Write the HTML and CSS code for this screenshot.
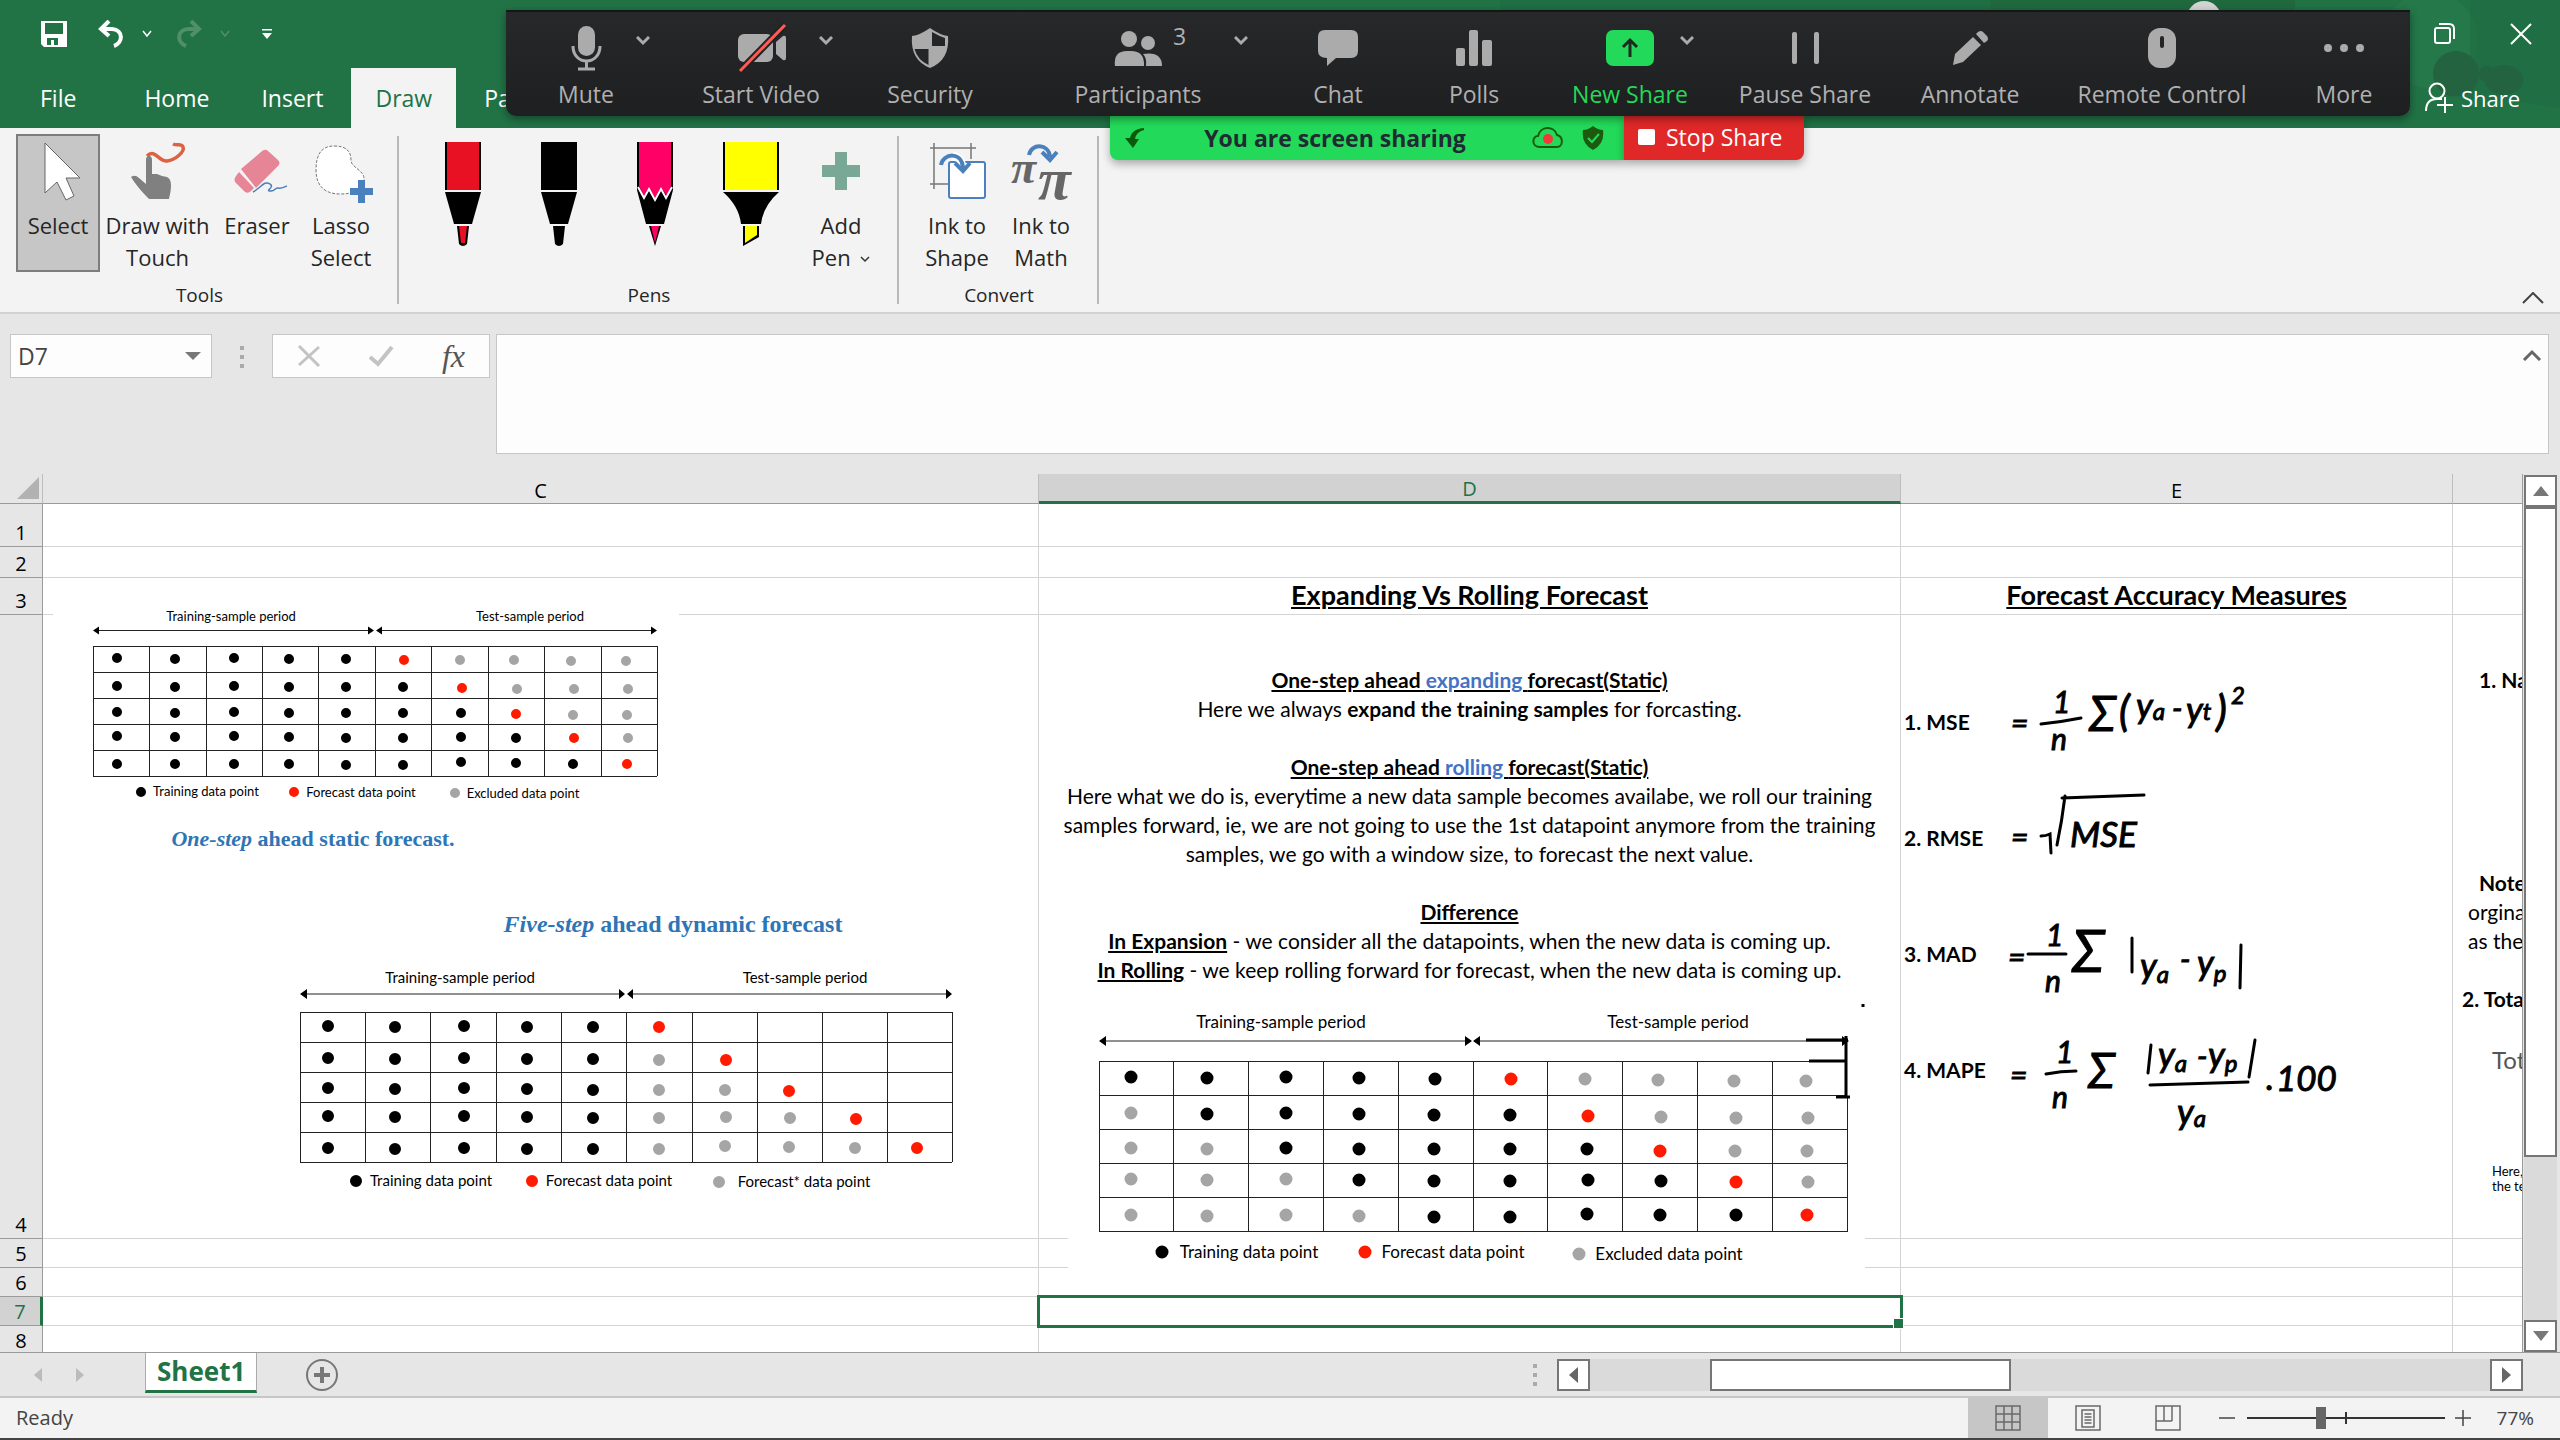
FILE: index.html
```html
<!DOCTYPE html>
<html lang="en">
<head>
<meta charset="utf-8">
<title>Forecasting workbook</title>
<link rel="stylesheet" href="styles.css">
</head>
<body>
<header class="titlebar">
  <svg class="decor" width="1060" height="128" viewBox="1500 0 1060 128" aria-hidden="true">
    <path fill="#1f6a3f" d="M1500 0h490v20h-490z" opacity=".5"/>
    <path fill="#20693f" d="M1990 0h305v20h-305z"/>
    <circle cx="2430" cy="40" r="48" fill="#24784a"/>
    <path fill="#20693f" opacity=".5" d="M2470 0h90v108q-60-10-90-10z"/>
    <circle cx="2456" cy="74" r="23" fill="#23633f"/>
    <circle cx="2487" cy="74" r="8" fill="#23633f"/>
    <ellipse cx="2504" cy="80" rx="19" ry="15" fill="#23633f"/>
    <path fill="#217346" d="M2410 104q30-10 60-7 40 10 90 11v20h-150z"/>
    <circle cx="2204" cy="18" r="17" fill="#d4d4d4"/>
  </svg>
  <div class="quick">
    <button class="plain" aria-label="Save"><svg width="26" height="26" viewBox="0 0 26 26"><path fill="#fff" fill-rule="evenodd" d="M0 0h26v26H3l-3-3zM4 2v11h18V2zM6 17v7h4v-5h3v5h4v-7z"/></svg></button>
    <button class="plain undo" aria-label="Undo"><svg width="26" height="28" viewBox="0 0 26 28"><path fill="none" stroke="#fff" stroke-width="4" d="M3 9h11c12 1 11 14 2 17"/><path fill="none" stroke="#fff" stroke-width="4" d="M11 1L3 9l8 7"/></svg></button>
    <button class="plain" aria-label="Undo history"><svg width="10" height="8" viewBox="0 0 10 8"><path fill="none" stroke="#fff" stroke-width="1.500" d="M1 1l4 5 4-5"/></svg></button>
    <button class="plain redo" aria-label="Redo"><svg width="26" height="28" viewBox="0 0 26 28"><path fill="none" stroke="#4f9069" stroke-width="4" d="M23 9H12C0 10 1 23 10 26"/><path fill="none" stroke="#4f9069" stroke-width="4" d="M15 1l8 8-8 7"/></svg></button>
    <button class="plain" aria-label="Redo history"><svg width="10" height="8" viewBox="0 0 10 8"><path fill="none" stroke="#4f9069" stroke-width="1.500" d="M1 1l4 5 4-5"/></svg></button>
    <button class="plain custom" aria-label="Customize toolbar"><svg width="10" height="10" viewBox="0 0 10 10"><path fill="#fff" d="M0 0h10v1.500H0zM0 4h10l-5 6z"/></svg></button>
    <span class="spring"></span>
    <button class="plain" aria-label="Restore"><svg width="22" height="22" viewBox="0 0 22 22"><path fill="none" stroke="#fff" stroke-width="2" d="M1 7q0-2 2-2h11q2 0 2 2v11q0 2-2 2H3q-2 0-2-2zM5 1h10q5 0 5 5v10"/></svg></button>
    <button class="plain close" aria-label="Close"><svg width="22" height="22" viewBox="0 0 22 22"><path stroke="#fff" stroke-width="2" d="M1 1l20 20M21 1L1 21"/></svg></button>
  </div>
  <nav class="tabs">
    <a href="#" class="tab file">File</a>
    <a href="#" class="tab">Home</a>
    <a href="#" class="tab">Insert</a>
    <a href="#" class="tab current">Draw</a>
    <a href="#" class="tab">Page</a>
    <span class="spring"></span>
    <button class="plain share"><svg width="28" height="32" viewBox="0 0 28 32"><circle cx="12" cy="9" r="7.500" fill="none" stroke="#fff" stroke-width="2"/><path fill="none" stroke="#fff" stroke-width="2" d="M1 29q0-12 11-12h5M20 15v16M12 23h16"/></svg>Share</button>
  </nav>
</header>

<section class="ribbon" aria-label="Draw ribbon">
  <div class="group">
    <div class="group-items">
      <button class="tool pressed"><svg width="50" height="70" viewBox="33 140 50 70"><path fill="#fff" stroke="#666" stroke-width="1" d="M45 144v50l12-11 9 18 8-4-8-18h14z"/></svg><span>Select</span></button>
      <button class="tool wide"><svg width="60" height="70" viewBox="127 140 60 70"><path fill="none" stroke="#db6341" stroke-width="3.500" d="M146 157c8-8 12 6 20 5s18-9 16-14c-1-4-6-1-10-3"/><path fill="#808080" d="M145 161q0-4 3-4t3 4v14l5 0 5 2 5 1q4 2 4 8c0 6-1 9-2 14h-20q-12-12-18-22 4-3 8 1l7 6z"/></svg><span>Draw with<br>Touch</span></button>
      <button class="tool"><svg width="60" height="70" viewBox="227 140 60 70"><path fill="#e58595" d="M241 170l20-17q4-4 7-1l10 9q3 3 0 6l-22 22-15-19z"/><path fill="#e58595" d="M239 173l-3 4q-3 4 0 7l9 9q3 2 6-1l3-3z"/><path fill="none" stroke="#4a7ebb" stroke-width="1.500" d="M253 193c8-4 11-12 17-8 5 3-5 7 0 7 5 1 5-4 8-3s5 0 9-2"/></svg><span>Eraser</span></button>
      <button class="tool"><svg width="70" height="70" viewBox="306 140 70 70"><path fill="#fff" stroke="#777" stroke-dasharray="3 1.500" d="M334 147c12 0 17 5 17 14 0 8 14 10 13 20s-10 14-24 14c-16 0-24-9-24-24s5-24 18-24z"/><path fill="#4a81bd" d="M358 181h7v8h8v7h-8v8h-7v-8h-8v-7h8z"/></svg><span>Lasso<br>Select</span></button>
    </div>
    <div class="group-name">Tools</div>
  </div>
  <div class="group pens">
    <div class="group-items">
      <button class="tool pen" aria-label="Red pen"><svg width="36" height="104" viewBox="0 0 36 104"><path d="M0 0h36v48H0zM0 50h36l-9 32H9zM12 84h12l-2 18q-4 4-8 0z"/><path fill="#e81123" d="M2 0h32v48H2zM14 84h8l-2 17h-4z"/></svg></button>
      <button class="tool pen" aria-label="Black pen"><svg width="36" height="104" viewBox="0 0 36 104"><path d="M0 0h36v48H0zM0 50h36l-9 32H9zM12 84h12l-2 18q-4 4-8 0z"/></svg></button>
      <button class="tool pen" aria-label="Pink pencil"><svg width="36" height="104" viewBox="0 0 36 104"><path d="M0 0h36v48l-9 34H9L0 48zM12 84h12l-6 20z"/><path fill="#ff0066" d="M2 0h32v44l-4 10-6-8-6 10-6-10-5 8-5-10zM14 84h8l-4 17z"/><path fill="none" stroke="#fff" stroke-width="2" d="M1 45l6 11 5-9 6 11 6-11 5 9 6-11"/></svg></button>
      <button class="tool pen" aria-label="Yellow highlighter"><svg width="56" height="104" viewBox="0 0 56 104"><path d="M0 0h56v48H0zM0 50h56q-16 14-18 32H18Q16 64 0 50zM20 84h16v11l-16 9z"/><path fill="#ff0" d="M2 0h52v48H2zM22 84h12v9l-12 8z"/></svg></button>
      <button class="tool"><svg width="50" height="70" viewBox="816 140 50 70"><path fill="#7aa897" d="M835 153h12v13h13v12h-13v13h-12v-13h-13v-12h13z"/></svg><span>Add<br>Pen <svg width="10" height="8" viewBox="0 0 10 8"><path fill="none" stroke="#333" stroke-width="1.500" d="M1 1l4 4 4-4"/></svg></span></button>
    </div>
    <div class="group-name">Pens</div>
  </div>
  <div class="group">
    <div class="group-items">
      <button class="tool"><svg width="70" height="70" viewBox="921 140 70 70"><path fill="none" stroke="#777" stroke-width="1.500" d="M933 144v46M970 144v16M929 149h46M929 185h18"/><rect x="948" y="163" width="36" height="36" rx="2" fill="#fff" stroke="#4a81bd" stroke-width="2"/><path fill="none" stroke="#fff" stroke-width="8" d="M952 157q9 1 9 12"/><path fill="none" stroke="#4a81bd" stroke-width="4" d="M940 166c2-12 21-14 22 3"/><path fill="none" stroke="#4a81bd" stroke-width="4" d="M954 164l8 8 7-8"/></svg><span>Ink to<br>Shape</span></button>
      <button class="tool"><svg width="70" height="70" viewBox="1005 140 70 70"><path fill="none" stroke="#4a81bd" stroke-width="4" d="M1028 156c2-12 20-12 21 2M1041 153l8 8 7-8"/><text class="pi small-pi" x="1010" y="184">π</text><text class="pi big-pi" x="1037" y="200">π</text></svg><span>Ink to<br>Math</span></button>
    </div>
    <div class="group-name">Convert</div>
  </div>
  <span class="spring"></span>
  <button class="plain collapse" aria-label="Collapse the ribbon"><svg width="22" height="12" viewBox="0 0 22 12"><path fill="none" stroke="#444" stroke-width="2" d="M1 11L11 1l10 10"/></svg></button>
</section>

<section class="formula-bar">
  <div class="namebox"><input type="text" value="D7" aria-label="Name box"><button class="plain" aria-label="Names"><svg width="16" height="8" viewBox="0 0 16 8"><path fill="#777" d="M0 0h16l-8 8z"/></svg></button></div>
  <svg class="grip" width="4" height="22" viewBox="0 0 4 22"><path fill="#aaa" d="M0 0h4v4H0zM0 9h4v4H0zM0 18h4v4H0z"/></svg>
  <div class="entry">
    <button class="plain" aria-label="Cancel"><svg width="24" height="22" viewBox="0 0 24 22"><path fill="none" stroke="#c3c3c3" stroke-width="3" d="M2 1l20 20M22 2L2 20"/></svg></button>
    <button class="plain" aria-label="Enter"><svg width="26" height="22" viewBox="0 0 26 22"><path fill="none" stroke="#c3c3c3" stroke-width="4" d="M2 12l8 7L24 2"/></svg></button>
    <button class="plain fx" aria-label="Insert function">fx</button>
  </div>
  <div class="formula"><textarea aria-label="Formula"></textarea><button class="plain" aria-label="Collapse formula bar"><svg width="20" height="12" viewBox="0 0 20 12"><path fill="none" stroke="#666" stroke-width="3" d="M2 11l8-8 8 8"/></svg></button></div>
</section>

<main class="workbook">
  <div class="sheet">
    <table class="cells">
      <colgroup><col class="col-num"><col class="col-c"><col class="col-d"><col class="col-e"><col class="col-f"></colgroup>
      <thead>
        <tr><th class="corner"><svg width="22" height="22" viewBox="0 0 22 22"><path fill="#b2b2b2" d="M22 0v22H0z"/></svg></th><th>C</th><th class="active">D</th><th>E</th><th></th></tr>
      </thead>
      <tbody>
        <tr class="row-1"><th>1</th><td></td><td></td><td></td><td></td></tr>
        <tr class="row-2"><th>2</th><td></td><td></td><td></td><td></td></tr>
        <tr class="row-3"><th>3</th><td></td><td class="heading">Expanding Vs Rolling Forecast</td><td class="heading">Forecast Accuracy Measures</td><td></td></tr>
        <tr class="row-4"><th>4</th><td></td>
          <td class="notes">
            <p><b><u>One-step ahead <span class="blue">expanding </span>forecast(Static)</u></b><br>Here we always <b>expand the training samples</b> for forcasting.</p>
            <p><b><u>One-step ahead <span class="blue">rolling </span>forecast(Static)</u></b><br>Here what we do is, everytime a new data sample becomes availabe, we roll our training<br>samples forward, ie, we are not going to use the 1st datapoint anymore from the training<br>samples, we go with a window size, to forecast the next value.</p>
            <p><b><u>Difference</u></b><br><b><u>In Expansion</u></b> - we consider all the datapoints, when the new data is coming up.<br><b><u>In Rolling</u></b> - we keep rolling forward for forecast, when the new data is coming up.</p>
          </td>
          <td class="measures"><p>1. MSE</p><p>2. RMSE</p><p>3. MAD</p><p>4. MAPE</p></td>
          <td class="next">
            <p class="in-2"><b>1. Na</b></p>
            <p class="note"><b class="in-2">Note</b><br><span class="in-1">orgina</span><br><span class="in-1">as the</span></p>
            <p><b class="in-0">2. Tota</b></p>
            <p class="in-3 total">Tot</p>
            <p class="in-3 tiny">Here,<br>the te</p>
          </td></tr>
        <tr class="row-n"><th>5</th><td></td><td></td><td></td><td></td></tr>
        <tr class="row-n"><th>6</th><td></td><td></td><td></td><td></td></tr>
        <tr class="row-n"><th class="active">7</th><td></td><td class="selected"></td><td></td><td></td></tr>
        <tr class="row-n"><th>8</th><td></td><td></td><td></td><td></td></tr>
      </tbody>
    </table>

    <svg class="picture static" width="626" height="268" viewBox="53 600 626 268">
      <path class="rule" d="M93 646.500h564M93 672.500h564M93 698.500h564M93 724.500h564M93 750.500h564M93 776.500h564M93.500 646v130M149.500 646v130M206.500 646v130M262.500 646v130M318.500 646v130M375.500 646v130M431.500 646v130M488.500 646v130M544.500 646v130M601.500 646v130M657.500 646v130"/>
      <path class="rule" d="M96 630.500h276M378 630.500h276"/>
      <path d="M93 630.500l6-4v8zM374 630.500l-6-4v8zM376 630.500l6-4v8zM657 630.500l-6-4v8z"/>
      <g class="dots d10">
        <path class="train" d="M117 658h0M175 659h0M234 658h0M289 659h0M346 659h0M117 686h0M175 687h0M234 686h0M289 687h0M346 687h0M403 687h0M117 712h0M175 713h0M234 712h0M289 713h0M346 713h0M403 713h0M461 713h0M117 736h0M175 737h0M234 736h0M289 737h0M346 738h0M403 738h0M461 737h0M516 738h0M117 764h0M175 764h0M234 764h0M289 764h0M346 765h0M403 765h0M461 762h0M516 763h0M573 764h0M141 792h0"/>
        <path class="cast" d="M404 660h0M462 688h0M516 714h0M574 738h0M627 764h0M294 792h0"/>
        <path class="gone" d="M460 660h0M514 660h0M571 661h0M626 661h0M517 689h0M574 689h0M628 689h0M573 715h0M627 715h0M628 738h0M455 793h0"/>
      </g>
      <g class="s13"><text x="231" y="621">Training-sample period</text><text x="530" y="621">Test-sample period</text><text x="206" y="796">Training data point</text><text x="361" y="797">Forecast data point</text><text x="523" y="798">Excluded data point</text></g>
      <text class="title s22" x="313" y="846"><tspan class="it">One-step</tspan> ahead static forecast.</text>
    </svg>

    <svg class="picture dynamic" width="660" height="298" viewBox="296 904 660 298">
      <path class="rule" d="M300 1012.500h652M300 1042.500h652M300 1072.500h652M300 1102.500h652M300 1132.500h652M300 1162.500h652M300.500 1012v150M365.500 1012v150M430.500 1012v150M496.500 1012v150M561.500 1012v150M626.500 1012v150M692.500 1012v150M757.500 1012v150M822.500 1012v150M887.500 1012v150M952.500 1012v150"/>
      <path class="rule" d="M304 994h319M630 994h319"/>
      <path d="M300 994l7-5v10zM625 994l-6-5v10zM627 994l6-5v10zM952 994l-6-5v10z"/>
      <g class="dots d12">
        <path class="train" d="M328 1026h0M395 1027h0M464 1026h0M527 1027h0M593 1027h0M328 1058h0M395 1059h0M464 1058h0M527 1059h0M593 1059h0M328 1088h0M395 1089h0M464 1088h0M527 1089h0M593 1090h0M328 1116h0M395 1117h0M464 1116h0M527 1117h0M593 1118h0M328 1148h0M395 1149h0M464 1148h0M527 1149h0M593 1149h0M356 1181h0"/>
        <path class="cast" d="M659 1027h0M726 1060h0M789 1091h0M856 1119h0M917 1148h0M532 1181h0"/>
        <path class="gone" d="M659 1060h0M659 1090h0M725 1090h0M659 1118h0M726 1117h0M790 1118h0M659 1149h0M725 1146h0M789 1147h0M855 1148h0M719 1182h0"/>
      </g>
      <g class="s15"><text x="460" y="983">Training-sample period</text><text x="805" y="983">Test-sample period</text><text x="431" y="1186">Training data point</text><text x="609" y="1186">Forecast data point</text><text x="804" y="1187">Forecast* data point</text></g>
      <text class="title s24" x="673" y="932"><tspan class="it">Five-step</tspan> ahead dynamic forecast</text>
    </svg>

    <svg class="picture rolling" width="797" height="278" viewBox="1068 1002 797 278">
      <path class="rule" d="M1099 1061.500h748M1099 1095.500h748M1099 1129.500h748M1099 1163.500h748M1099 1197.500h748M1099 1231.500h748M1099.500 1061v171M1173.500 1061v170M1248.500 1061v170M1323.500 1061v170M1398.500 1061v170M1473.500 1061v170M1547.500 1061v170M1622.500 1061v170M1697.500 1061v170M1772.500 1061v170M1847.500 1096v136"/>
      <path class="rule" d="M1103 1041h367M1477 1041h366"/>
      <path d="M1099 1041l7-5v10zM1472 1041l-7-5v10zM1473 1041l7-5v10zM1849 1041l-7-5v10z"/>
      <path fill="none" stroke="#000" stroke-width="3" d="M1846 1036v61M1806 1040h42M1809 1061h37M1836 1097h14M1863 1004v3"/>
      <g class="dots d13">
        <path class="train" d="M1131 1077h0M1207 1078h0M1286 1077h0M1359 1078h0M1435 1079h0M1207 1114h0M1286 1113h0M1359 1114h0M1434 1115h0M1510 1115h0M1286 1148h0M1359 1149h0M1434 1149h0M1510 1149h0M1587 1149h0M1359 1180h0M1434 1181h0M1510 1181h0M1588 1180h0M1661 1181h0M1434 1217h0M1510 1217h0M1587 1214h0M1660 1215h0M1736 1215h0M1162 1252h0"/>
        <path class="cast" d="M1511 1079h0M1588 1116h0M1660 1151h0M1736 1182h0M1807 1215h0M1365 1252h0"/>
        <path class="gone" d="M1585 1079h0M1658 1080h0M1734 1081h0M1806 1081h0M1131 1113h0M1661 1117h0M1736 1118h0M1808 1118h0M1131 1148h0M1207 1149h0M1735 1151h0M1807 1151h0M1131 1179h0M1207 1180h0M1286 1179h0M1808 1182h0M1131 1215h0M1207 1216h0M1286 1215h0M1359 1216h0M1579 1254h0"/>
      </g>
      <g class="s17"><text x="1281" y="1028">Training-sample period</text><text x="1678" y="1028">Test-sample period</text><text x="1249" y="1258">Training data point</text><text x="1453" y="1258">Forecast data point</text><text x="1669" y="1260">Excluded data point</text></g>
    </svg>

    <svg class="picture ink" width="340" height="470" viewBox="2005 676 340 470">
      <g class="strokes">
        <path d="M2041 724q20-2 40-6"/>
        <path d="M2041 836q5 0 9-2l1 19M2057 845q5-24 8-49M2062 798l82-3"/>
        <path d="M2028 954h38M2132 938v34M2241 945l-1 43"/>
        <path d="M2046 1074q15-3 30-3M2151 1045l-3 28M2255 1040l-6 37M2150 1085l98-3"/>
      </g>
      <g class="hand">
        <text x="2011" y="734">=</text><text x="2053" y="713">1</text><text x="2051" y="750">n</text><text class="sigma" x="2089" y="731">Σ</text><text class="tall" x="2119" y="726">(</text><text class="y" x="2136" y="718">y<tspan class="sub" dy="2">a</tspan></text><text x="2172" y="719">-</text><text class="y" x="2186" y="722">y<tspan class="sub" dy="-2">t</tspan></text><text class="tall" x="2216" y="726">)</text><text class="sub" x="2231" y="704">2</text>
        <text x="2011" y="848">=</text><text class="y" x="2070" y="847">MSE</text>
        <text x="2008" y="968">=</text><text x="2046" y="946">1</text><text x="2045" y="992">n</text><text class="sigma big" x="2072" y="972">Σ</text><text class="y" x="2140" y="978">y<tspan class="sub" dy="5">a</tspan></text><text x="2180" y="970">-</text><text class="y" x="2197" y="975">y<tspan class="sub" dy="7">p</tspan></text>
        <text x="2010" y="1086">=</text><text x="2056" y="1063">1</text><text x="2052" y="1108">n</text><text class="sigma" x="2088" y="1088">Σ</text><text class="y" x="2158" y="1067">y<tspan class="sub" dy="5">a</tspan></text><text x="2197" y="1067">-</text><text class="y" x="2208" y="1067">y<tspan class="sub" dy="5">p</tspan></text><text class="y" x="2177" y="1124">y<tspan class="sub" dy="3">a</tspan></text><text class="y" x="2266" y="1090">.</text><text class="y" x="2276" y="1091">100</text>
      </g>
    </svg>
  </div>
  <div class="vscroll">
    <button class="arrow" aria-label="Scroll up"><svg width="16" height="10" viewBox="0 0 16 10"><path fill="#777" d="M8 0l8 10H0z"/></svg></button>
    <div class="track"><div class="thumb"></div></div>
    <button class="arrow" aria-label="Scroll down"><svg width="16" height="10" viewBox="0 0 16 10"><path fill="#777" d="M0 0h16L8 10z"/></svg></button>
  </div>
</main>

<footer class="sheetbar">
  <div class="sheetnav">
    <button class="plain" aria-label="Previous sheet"><svg width="8" height="14" viewBox="0 0 8 14"><path fill="#bbb" d="M8 0v14L0 7z"/></svg></button>
    <button class="plain" aria-label="Next sheet"><svg width="8" height="14" viewBox="0 0 8 14"><path fill="#bbb" d="M0 0l8 7-8 7z"/></svg></button>
  </div>
  <a href="#" class="sheettab">Sheet1</a>
  <button class="plain add" aria-label="New sheet"><svg width="34" height="34" viewBox="0 0 34 34"><circle cx="17" cy="17" r="15" fill="none" stroke="#777" stroke-width="2"/><path stroke="#777" stroke-width="4" d="M17 9v16M9 17h16"/></svg></button>
  <span class="spring"></span>
  <svg width="4" height="22" viewBox="0 0 4 22"><path fill="#aaa" d="M0 0h4v4H0zM0 9h4v4H0zM0 18h4v4H0z"/></svg>
  <div class="hscroll">
    <button class="arrow" aria-label="Scroll left"><svg width="9" height="16" viewBox="0 0 9 16"><path fill="#666" d="M9 0v16L0 8z"/></svg></button>
    <div class="track"><div class="thumb"></div></div>
    <button class="arrow" aria-label="Scroll right"><svg width="9" height="16" viewBox="0 0 9 16"><path fill="#666" d="M0 0l9 8-9 8z"/></svg></button>
  </div>
</footer>

<footer class="status">
  <span class="ready">Ready</span>
  <span class="spring"></span>
  <button class="view on" aria-label="Normal view"><svg width="26" height="26" viewBox="0 0 26 26"><path fill="none" stroke="#6a6a6a" stroke-width="1.500" d="M1 1h24v24H1zM9 1v24M17 1v24M1 9h24M1 17h24"/></svg></button>
  <button class="view" aria-label="Page layout view"><svg width="26" height="26" viewBox="0 0 26 26"><path fill="none" stroke="#6a6a6a" stroke-width="1.500" d="M1 1h24v24H1zM7 5h12v17H7zM9.500 9h7M9.500 12h7M9.500 15h7M9.500 18h7"/></svg></button>
  <button class="view" aria-label="Page break view"><svg width="26" height="26" viewBox="0 0 26 26"><path fill="none" stroke="#6a6a6a" stroke-width="1.500" d="M1 1h24v24H1zM9 1v15M17 1v15M1 16h16"/></svg></button>
  <button class="plain minus" aria-label="Zoom out"><svg width="16" height="16" viewBox="0 0 16 16"><path stroke="#444" stroke-width="1.500" d="M0 8h16"/></svg></button>
  <div class="zoom"><input type="range" min="0" max="100" value="37" aria-label="Zoom"></div>
  <button class="plain plus" aria-label="Zoom in"><svg width="16" height="16" viewBox="0 0 16 16"><path stroke="#444" stroke-width="1.500" d="M0 8h16M8 0v16"/></svg></button>
  <span class="percent">77%</span>
</footer>

<aside class="meeting">
  <div class="controls">
    <button class="ctl"><svg width="56" height="56" viewBox="558 20 56 56"><rect x="578" y="26" width="17" height="30" rx="8.500"/><path class="line" d="M573 46c0 20 27 20 27 0M586.500 61v8M578 69h17"/></svg><span>Mute</span><svg class="caret" width="14" height="10" viewBox="0 0 14 10"><path class="line" d="M1 1l6 6 6-6"/></svg></button>
    <button class="ctl"><svg width="56" height="56" viewBox="733 20 56 56"><rect x="738" y="34" width="35" height="28" rx="6"/><path d="M776 42l7-6q3-1 3 2v20q0 3-3 2l-7-6z"/><path stroke="#222" stroke-width="7" d="M785 25l-45 46"/><path stroke="#ff5a54" stroke-width="3" d="M785 25l-45 46"/></svg><span>Start Video</span><svg class="caret" width="14" height="10" viewBox="0 0 14 10"><path class="line" d="M1 1l6 6 6-6"/></svg></button>
    <button class="ctl"><svg width="56" height="56" viewBox="902 20 56 56"><path d="M930 28q10 7 18 8 2 24-18 32-20-8-18-32 8-1 18-8z"/><path fill="#242526" d="M932 32q7 4 13 6v8h-13zM914.500 49h14v16q-11-5-14-16z"/></svg><span>Security</span></button>
    <button class="ctl people"><svg width="56" height="56" viewBox="1110 20 56 56"><circle cx="1129" cy="39" r="8"/><circle cx="1148" cy="43" r="7"/><path d="M1115 66q-2-16 14-15 16-1 15 15zM1146 66q1-8-3-12 19-3 19 12z"/></svg><span>Participants</span><b class="count">3</b><svg class="caret" width="14" height="10" viewBox="0 0 14 10"><path class="line" d="M1 1l6 6 6-6"/></svg></button>
    <button class="ctl"><svg width="56" height="56" viewBox="1310 20 56 56"><path d="M1325 30h26q7 0 7 7v14q0 7-7 7h-15l-9 8v-8q-9 0-9-7V37q0-7 7-7z"/></svg><span>Chat</span></button>
    <button class="ctl"><svg width="56" height="56" viewBox="1446 20 56 56"><rect x="1456" y="48" width="9" height="18" rx="2"/><rect x="1469" y="30" width="9" height="36" rx="2"/><rect x="1482" y="40" width="10" height="26" rx="2"/></svg><span>Polls</span></button>
    <button class="ctl new"><svg width="56" height="56" viewBox="1602 20 56 56"><rect x="1606" y="30" width="48" height="36" rx="7" fill="#23d959"/><path fill="none" stroke="#1c2b20" stroke-width="3" d="M1630 57V40M1623 47l7-7 7 7"/></svg><span>New Share</span><svg class="caret" width="14" height="10" viewBox="0 0 14 10"><path class="line" d="M1 1l6 6 6-6"/></svg></button>
    <button class="ctl"><svg width="56" height="56" viewBox="1777 20 56 56"><rect x="1792" y="32" width="5" height="32" rx="2"/><rect x="1814" y="32" width="5" height="32" rx="2"/></svg><span>Pause Share</span></button>
    <button class="ctl"><svg width="56" height="56" viewBox="1942 20 56 56"><path d="M1973 37l8 8-18 17-10 3 2-11zM1976 34l2-2q3-2 5 0l4 4q2 3 0 5l-3 2z"/></svg><span>Annotate</span></button>
    <button class="ctl"><svg width="56" height="56" viewBox="2134 20 56 56"><rect x="2148" y="28" width="28" height="40" rx="12"/><rect x="2160" y="36" width="4" height="12" rx="2" fill="#242526"/></svg><span>Remote Control</span></button>
    <button class="ctl"><svg width="56" height="56" viewBox="2318 20 56 56"><circle cx="2330" cy="48" r="4"/><circle cx="2346" cy="48" r="4"/><circle cx="2362" cy="48" r="4"/></svg><span>More</span></button>
  </div>
  <div class="sharing">
    <div class="notice">
      <svg width="22" height="20" viewBox="0 0 22 20"><path fill="#0b5a0b" d="M20 0C9 1 7 6 6 10H1l8 10 6-9h-4q1-7 9-9z"/></svg>
      <b>You are screen sharing</b>
      <svg class="cloud" width="32" height="24" viewBox="0 0 32 24"><path fill="none" stroke="#1c5a10" stroke-width="2" d="M8 21C-1 21 0 10 6 10 8 0 22-1 25 9c7 2 6 12 0 12z"/><circle cx="16" cy="13" r="5" fill="#f2383a"/></svg>
      <svg width="22" height="24" viewBox="0 0 22 24"><path fill="#1c5a10" d="M11 0q5 4 10 4 2 14-10 20Q-1 18 1 4q5 0 10-4z"/><path fill="none" stroke="#23d959" stroke-width="2" d="M6 12l4 4 7-8"/></svg>
    </div>
    <button class="stop"><svg width="18" height="16" viewBox="0 0 18 16"><rect width="17" height="16" rx="2" fill="#fff"/></svg>Stop Share</button>
  </div>
</aside>
</body>
</html>
```

FILE: styles.css
```css
* { box-sizing: border-box; }

body {
  margin: 0;
  min-height: 100vh;
  height: 100vh;
  display: flex;
  flex-direction: column;
  overflow: hidden;
  background: #e6e6e6;
  border-bottom: 2px solid #444;
  color: #262626;
  font: 22px/32px "Open Sans", "Noto Sans", sans-serif;
}

button, input, textarea { font: inherit; color: inherit; }
svg { display: block; flex: none; }
p { margin: 0; }
.spring { flex: 1; }

.plain {
  display: flex;
  align-items: center;
  justify-content: center;
  padding: 0;
  border: 0;
  background: none;
}

/* title bar */
.titlebar { position: relative; flex: none; background: #217346; color: #fff; }
.decor { position: absolute; top: 0; right: 0; }
.quick {
  position: relative;
  display: flex;
  align-items: center;
  height: 68px;
  padding: 0 28px 0 41px;
}
.undo { margin: 0 18px 0 31px; }
.redo { margin: 0 18px 0 24px; }
.custom { margin-left: 32px; }
.close { margin-left: 54px; }
.tabs {
  position: relative;
  display: flex;
  align-items: stretch;
  gap: 4px;
  height: 60px;
  padding: 0 40px 0 16px;
}
.tab {
  padding: 0 24px;
  color: #fff;
  font-size: 23px;
  line-height: 60px;
  text-decoration: none;
  white-space: nowrap;
}
.tab.file { margin-right: 16px; }
.tab.current { background: #f3f3f3; color: #217346; }
.share { gap: 8px; }

/* ribbon */
.ribbon {
  display: flex;
  flex: none;
  height: 186px;
  background: #f3f3f3;
  border-bottom: 2px solid #d2d2d2;
}
.group { position: relative; padding: 6px 16px 0; }
.group::after {
  content: "";
  position: absolute;
  top: 8px;
  right: 0;
  width: 2px;
  height: 168px;
  background: #b8b8b8;
}
.group-items { display: flex; }
.group-name {
  padding-top: 7px;
  font-size: 19px;
  text-align: center;
}
.tool {
  display: flex;
  flex-direction: column;
  align-items: center;
  width: 84px;
  height: 138px;
  padding: 5px 0 0;
  border: 0;
  background: none;
  white-space: nowrap;
}
.tool.pressed { background: #c6c6c6; box-shadow: inset 0 0 0 2px #7d7d7d; }
.tool.wide { width: 115px; }
.tool.pen { width: 96px; padding-top: 8px; }
.tool span svg { display: inline-block; vertical-align: middle; margin-left: 4px; }
.pi { fill: #666; font-family: "Liberation Serif", serif; font-style: italic; font-weight: 700; }
.small-pi { font-size: 46px; }
.big-pi { font-size: 60px; }
.collapse { align-self: flex-end; margin: 0 16px 8px 0; }

/* formula bar */
.formula-bar {
  display: flex;
  flex: none;
  align-items: flex-start;
  height: 160px;
  padding: 20px 11px 0 10px;
}
.namebox, .entry {
  display: flex;
  align-items: center;
  height: 44px;
  border: 1px solid #c6c6c6;
  background: #fdfdfd;
}
.namebox { width: 202px; padding-right: 10px; }
.namebox input {
  flex: 1;
  min-width: 0;
  padding: 0 7px;
  border: 0;
  background: none;
  color: #444;
  font-size: 23px;
}
.grip { margin: 12px 28px 0; }
.entry { width: 218px; justify-content: space-between; padding: 0 24px; }
.fx { font: italic 32px/32px "Liberation Serif", serif; color: #555; }
.formula {
  display: flex;
  flex: 1;
  align-items: flex-start;
  height: 120px;
  margin-left: 6px;
  padding: 14px 6px 0 0;
  border: 1px solid #c6c6c6;
  background: #fdfdfd;
}
.formula textarea { flex: 1; height: 90px; border: 0; background: none; resize: none; }

/* worksheet */
.workbook { display: flex; flex: 1; min-height: 0; }
.sheet {
  position: relative;
  flex: 1;
  min-width: 0;
  overflow: hidden;
  border-right: 1px solid #9b9b9b;
}
.cells {
  width: 2853px;
  table-layout: fixed;
  border-collapse: separate;
  border-spacing: 0;
  background: #fff;
  color: #000;
}
.col-num { width: 43px; }
.col-c { width: 996px; }
.col-d { width: 862px; }
.col-e { width: 552px; }
.col-f { width: 400px; }
.cells th, .cells td {
  padding: 0;
  border: 0 solid #d4d4d4;
  border-width: 0 1px 1px 0;
}
.cells th {
  background: #e6e6e6;
  border-color: #9b9b9b;
  font-size: 20px;
  font-weight: 400;
  line-height: 26px;
  vertical-align: bottom;
}
.cells thead th { height: 30px; border-right-color: #bdbdbd; line-height: 24px; }
.cells thead .active { background: #d2d2d2; color: #217346; border-bottom: 3px solid #217346; }
.cells tbody .active { background: #d2d2d2; color: #217346; border-right: 3px solid #217346; }
.corner svg { margin: 0 0 4px 17px; }
.row-1 { height: 43px; }
.row-2 { height: 31px; }
.row-3 { height: 37px; }
.row-4 { height: 624px; }
.row-n { height: 29px; }
.cells td { font: 21px/29px Lato, "Open Sans", sans-serif; vertical-align: top; }
.cells .heading {
  font-size: 27px;
  font-weight: 700;
  line-height: 34px;
  text-align: center;
  text-decoration: underline;
}
.cells .notes { padding-top: 50px; text-align: center; white-space: nowrap; }
.notes p { margin-bottom: 29px; }
.blue { color: #4472c4; }
.cells .measures { padding: 92px 0 0 3px; font-weight: 700; }
.measures p { height: 116px; }
.cells .next { padding: 50px 0 0 9px; white-space: nowrap; }
.in-1 { padding-left: 6px; }
.in-2 { padding-left: 17px; }
.in-3 { padding-left: 30px; }
.note { margin: 174px 0 29px; }
.total { margin-top: 32px; font-size: 24px; color: #555; }
.tiny { margin-top: 90px; font-size: 13px; line-height: 15px; }
.cells .selected { position: relative; outline: 3px solid #217346; outline-offset: -1px; }
.selected::after {
  content: "";
  position: absolute;
  right: -4px;
  bottom: -4px;
  width: 9px;
  height: 9px;
  border: 1px solid #fff;
  background: #217346;
}

/* pictures floating over the cells */
.picture { position: absolute; }
.static { left: 53px; top: 126px; background: #fff; }
.dynamic { left: 296px; top: 430px; }
.rolling { left: 1068px; top: 528px; background: #fff; }
.ink { left: 2005px; top: 202px; }
.picture text { font-family: Lato, "Open Sans", sans-serif; text-anchor: middle; }
.rule { fill: none; stroke: #222; stroke-width: 1; }
.dots { fill: none; stroke-linecap: round; }
.train { stroke: #000; }
.cast { stroke: #ff1a00; }
.gone { stroke: #a5a5a5; }
.d10 { stroke-width: 10px; }
.d12 { stroke-width: 12px; }
.d13 { stroke-width: 13px; }
.s13 { font-size: 13px; }
.s15 { font-size: 15px; }
.s17 { font-size: 17px; }
.s22 { font-size: 22px; }
.s24 { font-size: 24px; }
.picture .title { font-family: "Liberation Serif", serif; font-weight: 700; fill: #2e75b6; }
.it { font-style: italic; }
.strokes { fill: none; stroke: #000; stroke-width: 3; stroke-linecap: round; }
.picture .hand text { font-size: 30px; font-style: italic; text-anchor: start; stroke: #000; stroke-width: 1px; }
.picture .hand .y { font-size: 35px; }
.picture .hand .sub { font-size: 24px; }
.picture .hand .sigma { font-size: 48px; }
.picture .hand .big { font-size: 58px; }
.picture .hand .tall { font-size: 42px; }

/* scroll bars */
.vscroll { display: flex; flex-direction: column; width: 37px; padding: 1px 3px 0 1px; }
.track { background: #dadada; }
.thumb { background: #fff; border: 2px solid #767676; }
.arrow {
  display: flex;
  align-items: center;
  justify-content: center;
  width: 33px;
  height: 32px;
  padding: 0;
  background: #fff;
  border: 2px solid #767676;
}
.vscroll .track { flex: 1; }
.vscroll .thumb { height: 80%; }
.hscroll { display: flex; align-items: center; width: 966px; margin: 0 37px 0 20px; }
.hscroll .track { flex: 1; height: 32px; padding-left: 120px; }
.hscroll .thumb { width: 301px; height: 32px; }

/* sheet tabs */
.sheetbar {
  display: flex;
  flex: none;
  align-items: center;
  height: 46px;
  border-top: 1px solid #9b9b9b;
  border-bottom: 2px solid #c6c6c6;
}
.sheetnav { display: flex; gap: 34px; width: 145px; padding-left: 34px; }
.sheettab {
  align-self: flex-start;
  height: 40px;
  padding: 0 11px;
  border: 1px solid #ababab;
  border-width: 0 1px 3px;
  border-bottom-color: #217346;
  background: #fff;
  color: #217346;
  font-size: 26px;
  font-weight: 700;
  line-height: 36px;
  text-decoration: none;
}
.add { margin-left: 48px; }

/* status bar */
.status {
  display: flex;
  flex: none;
  align-items: center;
  height: 40px;
  padding: 0 26px 0 16px;
  background: #f3f3f3;
  color: #444;
  font-size: 19px;
}
.ready { font-size: 20px; }
.view {
  display: flex;
  align-items: center;
  justify-content: center;
  width: 80px;
  height: 40px;
  padding: 0;
  border: 0;
  background: none;
}
.view.on { background: #c6c6c6; }
.minus { margin: 0 12px 0 11px; }
.plus { margin: 0 26px 0 10px; }
.zoom { position: relative; width: 198px; }
.zoom::before {
  content: "";
  position: absolute;
  left: 98px;
  top: 10px;
  width: 2px;
  height: 12px;
  background: #333;
}
.zoom input {
  display: block;
  width: 100%;
  height: 32px;
  margin: 0;
  appearance: none;
  background: linear-gradient(#333, #333) center / 100% 2px no-repeat;
}
.zoom input::-webkit-slider-thumb { appearance: none; width: 10px; height: 22px; background: #666; }

/* floating meeting controls */
.meeting { position: absolute; top: 10px; left: 506px; right: 150px; }
.controls {
  position: relative;
  display: grid;
  grid-template-columns: 160fr 190fr 148fr 268fr 132fr 140fr 172fr 178fr 152fr 232fr 132fr;
  height: 106px;
  border-top: 2px solid #151617;
  border-radius: 0 0 10px 10px;
  background: linear-gradient(#27282a, #1e1f21);
  box-shadow: 0 3px 8px rgba(0, 0, 0, .4);
}
.ctl {
  position: relative;
  display: flex;
  flex-direction: column;
  align-items: center;
  min-width: 0;
  padding: 8px 0 0;
  border: 0;
  background: none;
  color: #b0b0b0;
  fill: #ababab;
  font-size: 23px;
  white-space: nowrap;
}
.ctl span { margin-top: 2px; }
.line { fill: none; stroke: #ababab; stroke-width: 3; }
.new { color: #23d959; }
.caret { position: absolute; left: calc(50% + 50px); top: 24px; }
.ctl:nth-child(2) .caret { left: calc(50% + 58px); }
.people .caret { left: calc(50% + 96px); }
.count { position: absolute; left: calc(50% + 35px); top: 8px; font-weight: 400; }
.sharing { display: flex; height: 44px; margin: 0 606px 0 604px; }
.notice, .stop { box-shadow: 0 4px 8px rgba(0, 0, 0, .3); }
.notice {
  display: flex;
  flex: 1;
  align-items: center;
  padding: 0 20px 0 14px;
  border-radius: 0 0 0 8px;
  background: #23d959;
  color: #1f2a33;
  font-size: 23px;
  white-space: nowrap;
}
.notice b { flex: 1; padding-right: 8px; text-align: center; }
.cloud { margin-right: 18px; }
.stop {
  display: flex;
  align-items: center;
  gap: 10px;
  width: 180px;
  padding: 0 14px 2px;
  border: 0;
  border-radius: 0 0 8px 0;
  background: #e02828;
  color: #fff;
  font-size: 23px;
  white-space: nowrap;
}
```
